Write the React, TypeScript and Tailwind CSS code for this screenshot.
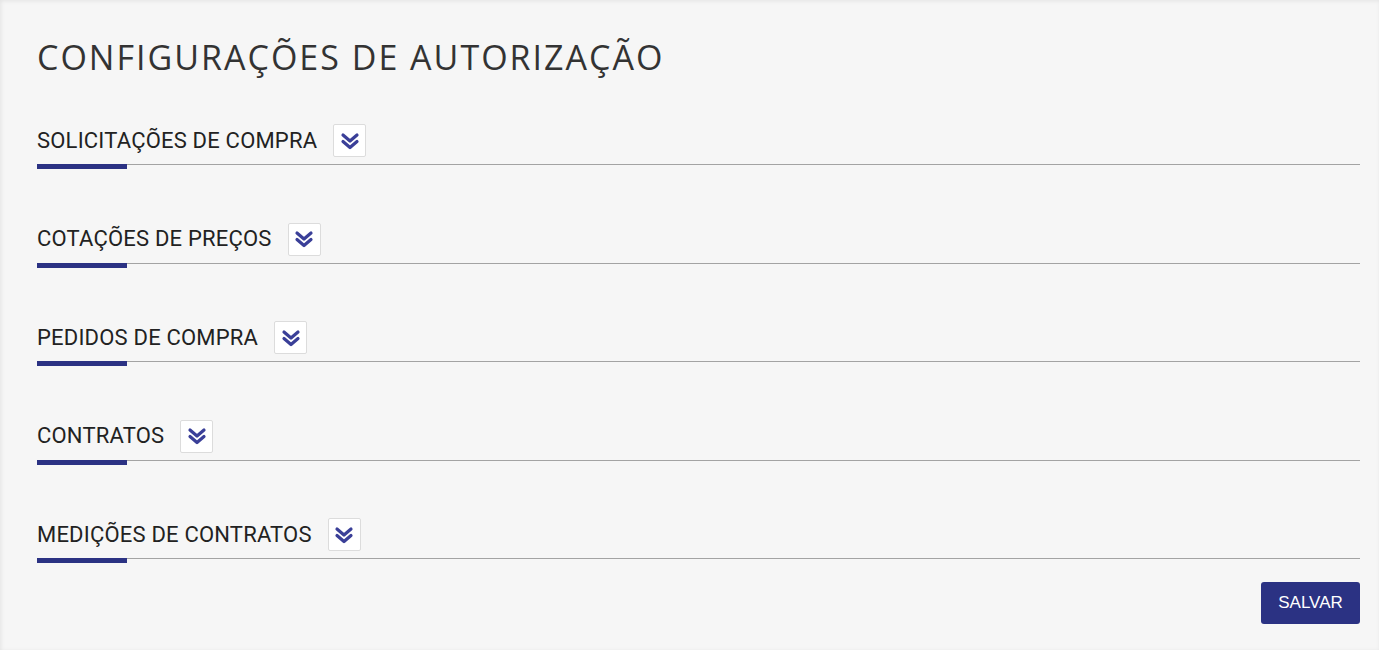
import { useState } from 'react';

const sections = [
  'SOLICITAÇÕES DE COMPRA',
  'COTAÇÕES DE PREÇOS',
  'PEDIDOS DE COMPRA',
  'CONTRATOS',
  'MEDIÇÕES DE CONTRATOS',
];

function DoubleChevron() {
  return (
    <svg width="20" height="18" viewBox="0 0 20 18" fill="none">
      <path d="M3 3 L10 9 L17 3" stroke="#3a3f98" strokeWidth="3.2" strokeLinecap="round" strokeLinejoin="round" />
      <path d="M3 9.5 L10 15.5 L17 9.5" stroke="#3a3f98" strokeWidth="3.2" strokeLinecap="round" strokeLinejoin="round" />
    </svg>
  );
}

function Section({ title }: { title: string }) {
  const [open, setOpen] = useState(false);
  return (
    <div className="flex flex-col">
      <div className="flex items-center gap-4 h-[33px]">
        <h2 className="text-[22px] tracking-[0.2px] text-[#222] font-['Roboto',sans-serif] leading-none">{title}</h2>
        <button
          onClick={() => setOpen(!open)}
          className="w-[33px] h-[33px] flex items-center justify-center bg-white border border-[#dcdcdc] rounded-[2px]"
        >
          <DoubleChevron />
        </button>
      </div>
      {/* divisor com destaque azul */}
      <div className="mt-[7px] h-px bg-[#a3a3a3]" />
      <div className="-mt-px h-[5px] w-[90px] bg-[#2b3283]" />
    </div>
  );
}

export default function App() {
  return (
    <div className="min-h-screen bg-[#f6f6f6] pl-[37px] pr-[19px] pt-[33px] shadow-[inset_1px_1px_4px_rgba(0,0,0,0.08)] font-['Roboto',sans-serif]">
      <h1 className="text-[34px] tracking-[2px] leading-[48px] text-[#333] font-['Open_Sans',sans-serif] font-normal">
        CONFIGURAÇÕES DE AUTORIZAÇÃO
      </h1>
      <div className="mt-[43px] flex flex-col gap-[53.5px]">
        {sections.map((s) => (
          <Section key={s} title={s} />
        ))}
      </div>
      <div className="flex justify-end mt-[19px]">
        <button className="w-[99px] h-[42px] bg-[#2b3283] text-white text-[17px] rounded-[3px] font-['Liberation_Sans',Arial,sans-serif]">
          SALVAR
        </button>
      </div>
    </div>
  );
}
